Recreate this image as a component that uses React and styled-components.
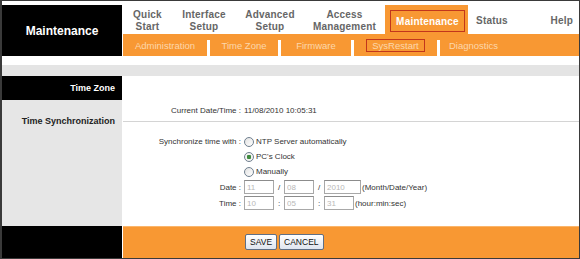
import React from "react";
import styled, { createGlobalStyle } from "styled-components";

const ORANGE = "#f89833";

const GlobalStyle = createGlobalStyle`
  html, body {
    margin: 0;
    padding: 0;
    background: #ffffff;
  }
`;

const tabs = [
  { lines: ["Quick", "Start"], width: 49 },
  { lines: ["Interface", "Setup"], width: 64 },
  { lines: ["Advanced", "Setup"], width: 68 },
  { lines: ["Access", "Management"], width: 81 },
];

const subItems = [
  { label: "Administration", width: 84 },
  { label: "Time Zone", width: 68 },
  { label: "Firmware", width: 70 },
  { label: "SysRestart", width: 83, active: true },
  { label: "Diagnostics", width: 67 },
];

const App = () => {
  return (
    <>
      <GlobalStyle />
      <Frame>
        {/* 상단 헤더 */}
        <Header>
          <Brand>Maintenance</Brand>
          <Nav>
            <Tabs>
              {tabs.map((tab) => (
                <Tab key={tab.lines[0]} width={tab.width}>
                  {tab.lines.map((line) => (
                    <span key={line}>{line}</span>
                  ))}
                </Tab>
              ))}
              <ActiveTab>
                <ActiveLabel>Maintenance</ActiveLabel>
              </ActiveTab>
              <Tab width={48}>Status</Tab>
              <HelpTab>Help</HelpTab>
            </Tabs>
            <SubNav>
              {subItems.map((item, idx) => (
                <React.Fragment key={item.label}>
                  {idx > 0 && <SubSeparator />}
                  <SubItem width={item.width}>
                    {item.active ? <SubActive>{item.label}</SubActive> : item.label}
                  </SubItem>
                </React.Fragment>
              ))}
            </SubNav>
          </Nav>
        </Header>

        <WhiteGap />
        <GrayBand />

        {/* 섹션 제목 */}
        <SectionRow>
          <SectionHead>Time Zone</SectionHead>
          <SectionFill />
        </SectionRow>

        <Body>
          <Side>
            <SideLabel>Time Synchronization</SideLabel>
          </Side>
          <Content>
            <InfoRow>
              <FieldLabel>Current Date/Time :</FieldLabel>
              <FieldValue>11/08/2010 10:05:31</FieldValue>
            </InfoRow>
            <Divider />
            <SyncForm>
              <FieldLabel>Synchronize time with :</FieldLabel>
              <RadioOption>
                <Radio />
                NTP Server automatically
              </RadioOption>
              <span />
              <RadioOption>
                <Radio checked />
                PC's Clock
              </RadioOption>
              <span />
              <RadioOption>
                <Radio />
                Manually
              </RadioOption>

              <FieldLabel>Date :</FieldLabel>
              <InputLine>
                <TimeInput width={30} value="11" readOnly />
                <Sep>/</Sep>
                <TimeInput width={30} value="08" readOnly />
                <Sep>/</Sep>
                <TimeInput width={37} value="2010" readOnly />
                <Hint>(Month/Date/Year)</Hint>
              </InputLine>

              <FieldLabel>Time :</FieldLabel>
              <InputLine>
                <TimeInput width={30} value="10" readOnly />
                <Sep>:</Sep>
                <TimeInput width={30} value="05" readOnly />
                <Sep>:</Sep>
                <TimeInput width={30} value="31" readOnly />
                <Hint>(hour:min:sec)</Hint>
              </InputLine>
            </SyncForm>
          </Content>
        </Body>

        {/* 하단 버튼 바 */}
        <Footer>
          <FooterSide />
          <FooterBar>
            <Button>SAVE</Button>
            <Button>CANCEL</Button>
          </FooterBar>
        </Footer>
      </Frame>
    </>
  );
};

/* 스타일 컴포넌트 css */
const Frame = styled.div`
  width: 580px;
  height: 259px;
  box-sizing: border-box;
  border: 1px solid #3a3a3a;
  border-left-width: 2px;
  display: flex;
  flex-direction: column;
  font-family: "Liberation Sans", Arial, sans-serif;
  background: #ffffff;
  overflow: hidden;
`;

const Header = styled.div`
  height: 55px;
  box-sizing: border-box;
  padding-top: 4px;
  display: flex;
  background: #ffffff;
`;

const Brand = styled.div`
  width: 120px;
  background: #000000;
  color: #ffffff;
  font-size: 12px;
  font-weight: bold;
  display: flex;
  align-items: center;
  justify-content: center;
`;

const Nav = styled.div`
  flex: 1;
  margin-left: 1px;
  display: flex;
  flex-direction: column;
`;

const Tabs = styled.div`
  height: 29px;
  display: flex;
`;

const Tab = styled.div`
  width: ${(p) => p.width}px;
  display: flex;
  flex-direction: column;
  align-items: center;
  justify-content: center;
  padding-top: 3px;
  box-sizing: border-box;
  font-size: 10px;
  font-weight: bold;
  line-height: 12px;
  letter-spacing: 0.2px;
  color: #666666;
`;

const HelpTab = styled(Tab)`
  flex: 1;
  align-items: flex-end;
  padding-right: 6px;
`;

const ActiveTab = styled.div`
  width: 83px;
  box-sizing: border-box;
  background: ${ORANGE};
  padding: 5px 3px 2px 5px;
  display: flex;
`;

const ActiveLabel = styled.div`
  flex: 1;
  border: 1px solid #c2361c;
  color: #ffffff;
  font-size: 10px;
  font-weight: bold;
  letter-spacing: 0.2px;
  display: flex;
  align-items: center;
  justify-content: center;
`;

const SubNav = styled.div`
  height: 22px;
  background: ${ORANGE};
  display: flex;
`;

const SubItem = styled.div`
  width: ${(p) => p.width}px;
  display: flex;
  align-items: center;
  justify-content: center;
  font-size: 9.5px;
  color: #fcd7ac;
`;

const SubActive = styled.span`
  border: 1px solid #c2361c;
  padding: 0 5px;
  line-height: 11px;
`;

const SubSeparator = styled.div`
  width: 3px;
  height: 16px;
  align-self: flex-end;
  background: #ffffff;
`;

const WhiteGap = styled.div`
  height: 9px;
  background: #ffffff;
`;

const GrayBand = styled.div`
  height: 11px;
  background: #e4e4e4;
`;

const SectionRow = styled.div`
  height: 24px;
  display: flex;
`;

const SectionHead = styled.div`
  width: 120px;
  box-sizing: border-box;
  background: #000000;
  color: #ffffff;
  font-size: 9px;
  font-weight: bold;
  display: flex;
  align-items: center;
  justify-content: flex-end;
  padding-right: 7px;
`;

const SectionFill = styled.div`
  flex: 1;
  background: #ffffff;
`;

const Body = styled.div`
  height: 126px;
  display: flex;
`;

const Side = styled.div`
  width: 120px;
  box-sizing: border-box;
  background: #e6e6e6;
  padding: 16px 7px 0 0;
  text-align: right;
`;

const SideLabel = styled.div`
  font-size: 9px;
  line-height: 10px;
  font-weight: bold;
  color: #222222;
`;

const Content = styled.div`
  flex: 1;
  margin-left: 1px;
  display: flex;
  flex-direction: column;
  background: #ffffff;
`;

const InfoRow = styled.div`
  height: 21px;
  display: grid;
  grid-template-columns: 118px 1fr;
  column-gap: 3px;
  align-items: center;
`;

const FieldLabel = styled.div`
  text-align: right;
  font-size: 8px;
  color: #333333;
  align-self: center;
`;

const FieldValue = styled.div`
  font-size: 8px;
  color: #333333;
`;

const Divider = styled.div`
  height: 1px;
  background: #d4d4d4;
`;

const SyncForm = styled.div`
  flex: 1;
  box-sizing: border-box;
  padding-top: 12px;
  display: grid;
  grid-template-columns: 118px 1fr;
  grid-template-rows: 15px 15px 15px 16px 16px;
  column-gap: 3px;
  align-content: start;
`;

const RadioOption = styled.label`
  display: flex;
  align-items: center;
  gap: 2px;
  font-size: 8px;
  color: #333333;
`;

const Radio = styled.span`
  width: 10px;
  height: 10px;
  box-sizing: border-box;
  border-radius: 50%;
  border: 1px solid #6f7f8f;
  background: ${(p) =>
    p.checked
      ? "radial-gradient(circle, #3f8a3f 0 2px, #f2f2f2 2.5px)"
      : "linear-gradient(135deg, #e2e2e2, #ffffff)"};
  flex-shrink: 0;
`;

const InputLine = styled.div`
  display: flex;
  align-items: center;
`;

const TimeInput = styled.input`
  width: ${(p) => p.width}px;
  height: 14px;
  box-sizing: border-box;
  border: 1px solid #a8a8a8;
  border-top-color: #8c8c8c;
  padding: 0 2px;
  font-family: "Liberation Sans", Arial, sans-serif;
  font-size: 8px;
  color: #b8b8b8;
  background: #ffffff;
  outline: none;
`;

const Sep = styled.span`
  width: 10px;
  text-align: center;
  font-size: 8px;
  color: #333333;
`;

const Hint = styled.span`
  margin-left: 1px;
  font-size: 8px;
  color: #333333;
`;

const Footer = styled.div`
  height: 32px;
  display: flex;
`;

const FooterSide = styled.div`
  width: 120px;
  background: #000000;
`;

const FooterBar = styled.div`
  flex: 1;
  margin-left: 1px;
  background: ${ORANGE};
  box-shadow: inset 0 1px 0 #fbb56a;
  display: flex;
  align-items: center;
  gap: 2px;
  padding-left: 122px;
`;

const Button = styled.button`
  height: 16px;
  padding: 0 4px;
  border: 1px solid #5e6f86;
  border-radius: 2px;
  background: linear-gradient(#ffffff, #dfe5ef);
  font-family: "Liberation Sans", Arial, sans-serif;
  font-size: 8.5px;
  color: #111111;
  line-height: 14px;
`;

export default App;
